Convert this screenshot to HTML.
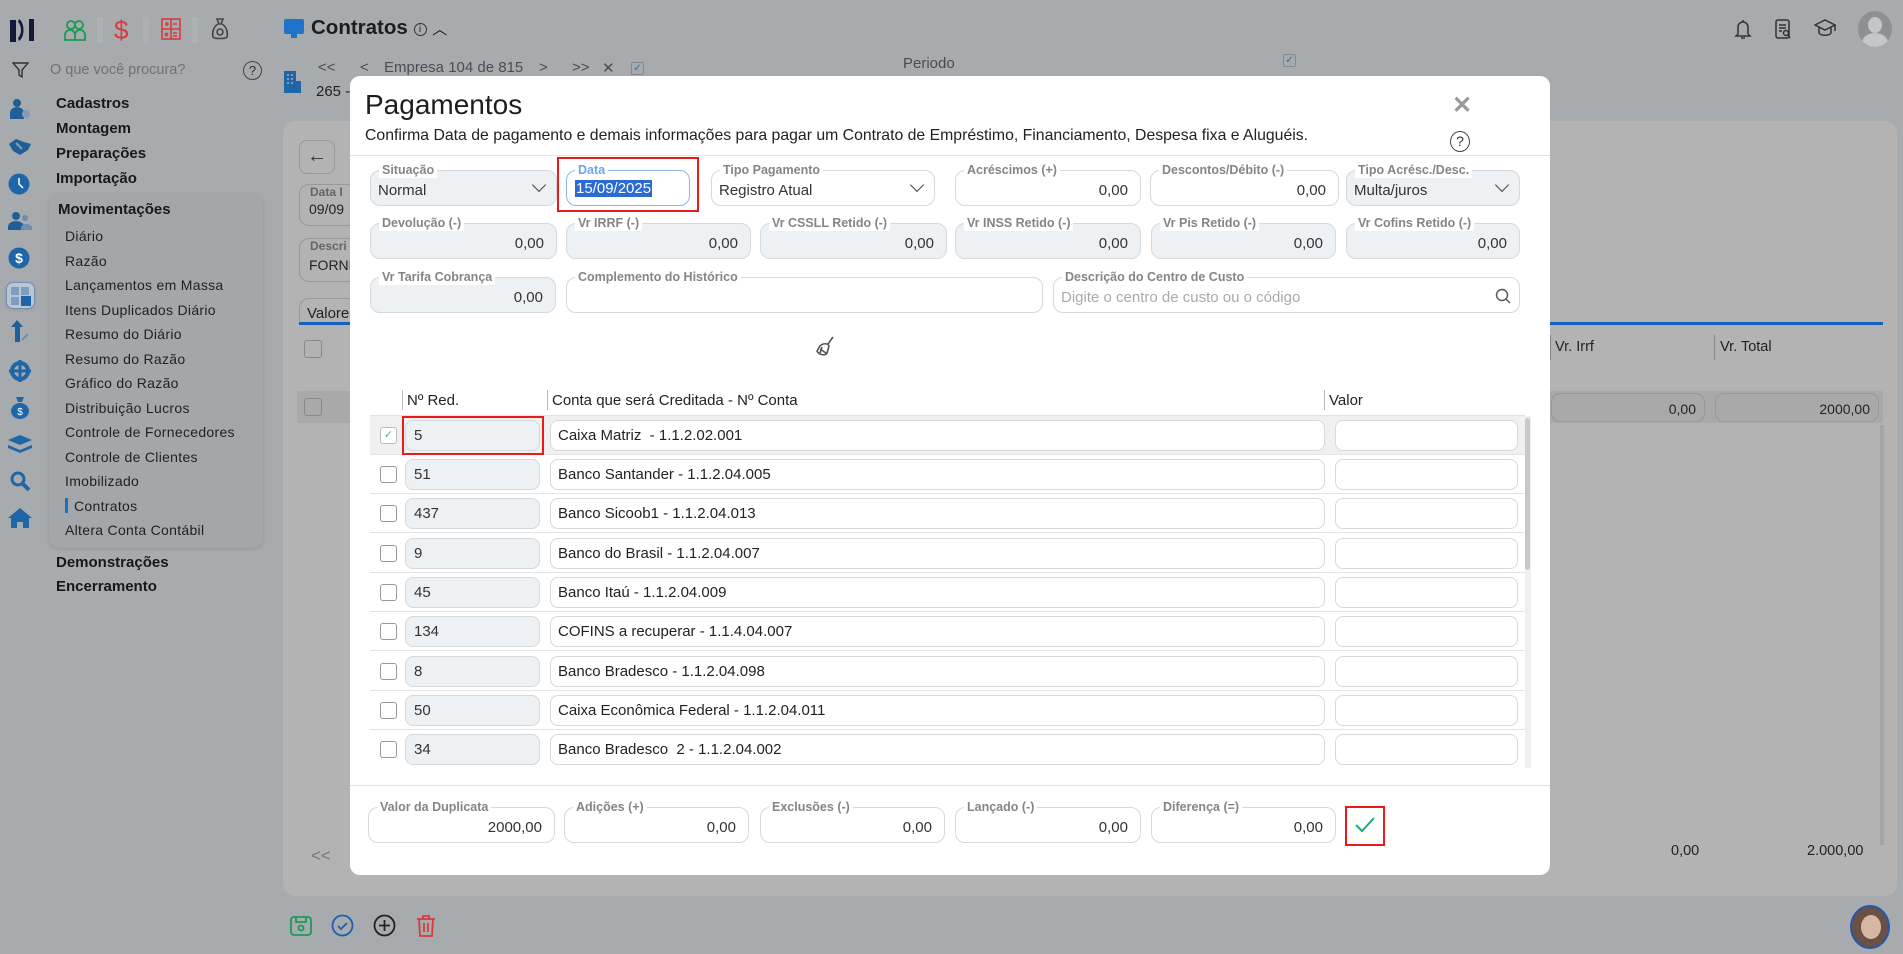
<!DOCTYPE html>
<html><head><meta charset="utf-8">
<style>
*{box-sizing:border-box;margin:0;padding:0}
body{width:1903px;height:954px;overflow:hidden;background:#a8abae;font-family:"Liberation Sans",sans-serif;position:relative;color:#222}
.a{position:absolute}
.side{font-size:14px;color:#1d2126;letter-spacing:.3px}
.hd{font-weight:bold;font-size:15px;color:#15181c}
.modal{position:absolute;left:350px;top:76px;width:1200px;height:799px;background:#fff;border-radius:10px;overflow:hidden}
.f{position:absolute;border:1px solid #d5d8dc;border-radius:10px;background:#fff;height:36px}
.f.g{background:#eef1f4}
.f .l{position:absolute;top:-9px;left:8px;background:#fff;padding:0 3px;font-size:12.5px;font-weight:bold;color:#858585;line-height:16px;white-space:nowrap}
.f .v{position:absolute;right:12px;top:11px;font-size:15px;color:#333}
.f .t{position:absolute;left:7px;top:11px;font-size:15px;color:#333}
.chev{position:absolute;right:12px;width:10px;height:10px;border-right:1.5px solid #444;border-bottom:1.5px solid #444;transform:rotate(45deg);top:9px}
.row{position:absolute;left:20px;width:1155px;height:39px;border-bottom:1px solid #e4e4e4}
.cb{position:absolute;left:10px;top:11px;width:17px;height:17px;border:1px solid #999;border-radius:3px;background:#fff}
.nr{position:absolute;left:35px;top:4px;width:135px;height:31px;background:#eef1f4;border:1px solid #d5d8dc;border-radius:8px;font-size:15px;padding:6px 0 0 8px;color:#333}
.ct{position:absolute;left:180px;top:4px;width:775px;height:31px;background:#fff;border:1px solid #d5d8dc;border-radius:8px;font-size:15px;padding:6px 0 0 7px;color:#222}
.vl{position:absolute;left:965px;top:4px;width:183px;height:31px;background:#fff;border:1px solid #d5d8dc;border-radius:8px}
.nav{position:absolute;top:59px;font-size:15px;color:#4a4d51}
</style></head><body>

<!-- top bar -->
<svg class="a" style="left:8px;top:16px" width="30" height="28"><path d="M2 4h6v22H2z" fill="#141a3a"/><path d="M11 3c6 4 6 18 0 22l-1-3c4-4 4-12 0-16z" fill="#141a3a"/><path d="M21 3h5v22h-5z" fill="#141a3a"/></svg>
<svg class="a" style="left:63px;top:18px" width="24" height="24" viewBox="0 0 24 24" fill="none" stroke="#1a9a55" stroke-width="1.8"><circle cx="8" cy="7" r="4"/><circle cx="16" cy="7" r="4"/><path d="M2 22v-5a5 5 0 0 1 10 0v5zM12 17a5 5 0 0 1 10 0v5h-10"/></svg>
<div class="a" style="left:97px;top:17px;width:6px;height:26px;background:#aeb1b4"></div>
<div class="a" style="left:114px;top:15px;font-size:26px;color:#d63c3c">$</div>
<div class="a" style="left:143px;top:17px;width:6px;height:26px;background:#aeb1b4"></div>
<svg class="a" style="left:161px;top:18px" width="20" height="22" viewBox="0 0 20 22" fill="none" stroke="#d63c3c" stroke-width="1.6"><rect x="1" y="1" width="18" height="20"/><path d="M10 1v20M1 11h18M4 6h4M6 4v4M12 6h4M4 15l3 3M7 15l-3 3M12 15h4M12 18h4"/></svg>
<div class="a" style="left:192px;top:17px;width:6px;height:26px;background:#aeb1b4"></div>
<svg class="a" style="left:211px;top:17px" width="18" height="24" viewBox="0 0 18 24" fill="none" stroke="#444" stroke-width="1.6"><path d="M6 2h6l-2 5h-2zM7 7C2 10 1 16 2 20c1 2 13 2 14 0 1-4 0-10-5-13"/><circle cx="9" cy="15" r="3"/></svg>
<div class="a" style="left:284px;top:19px;width:20px;height:15px;background:#1e73c8;border-radius:2px"></div>
<div class="a" style="left:291px;top:34px;width:6px;height:4px;background:#1e73c8"></div>
<div class="a" style="left:311px;top:16px;font-size:20.5px;font-weight:bold;color:#1a1d22">Contratos <span style="font-weight:normal;border:1px solid #333;border-radius:50%;display:inline-block;width:13px;height:13px;line-height:12px;text-align:center;font-size:10px;vertical-align:2px">i</span> <span style="font-size:15px;font-weight:normal">︿</span></div>

<svg class="a" style="left:1734px;top:18px" width="18" height="22" viewBox="0 0 18 22" fill="none" stroke="#333" stroke-width="1.5"><path d="M9 2v2M4 16V9a5 5 0 0 1 10 0v7l2 2H2zM7 20h4"/></svg>
<svg class="a" style="left:1775px;top:19px" width="17" height="21" viewBox="0 0 17 21" fill="none" stroke="#333" stroke-width="1.5"><rect x="1" y="1" width="13" height="18" rx="2"/><path d="M4 6h7M4 9h7M4 12h3"/><circle cx="11" cy="14" r="2.5"/><path d="M13 16l2 3"/></svg>
<svg class="a" style="left:1814px;top:18px" width="22" height="22" viewBox="0 0 22 22" fill="none" stroke="#333" stroke-width="1.5"><path d="M1 7l10-5 10 5-10 5zM5 9v6c2 3 10 3 12 0V9M21 7v6"/></svg>
<div class="a" style="left:1858px;top:11px;width:34px;height:36px;border-radius:50%;background:#8e9194;overflow:hidden"><div style="position:absolute;left:10px;top:6px;width:14px;height:16px;border-radius:50%;background:#c4c6c8"></div><div style="position:absolute;left:4px;top:22px;width:26px;height:20px;border-radius:50%;background:#c4c6c8"></div></div>

<!-- sidebar search -->
<svg class="a" style="left:12px;top:62px" width="17" height="17" viewBox="0 0 17 17" fill="none" stroke="#333" stroke-width="1.4"><path d="M1 1h15l-6 7v7l-3-2V8z"/></svg>
<div class="a" style="left:50px;top:62px;font-size:14.5px;color:#6e7175">O que você procura?</div>
<div class="a" style="left:243px;top:61px;width:19px;height:19px;border:1.5px solid #444;border-radius:50%;text-align:center;font-size:13px;line-height:17px;color:#333">?</div>

<!-- left icons -->
<svg class="a" style="left:9px;top:98px" width="22" height="22"><circle cx="8" cy="5" r="4" fill="#1f5f99"/><path d="M1 21v-6a7 6 0 0 1 14 0v6z" fill="#1f5f99"/><circle cx="17" cy="16" r="4" fill="#8a9bb0"/></svg>
<svg class="a" style="left:8px;top:138px" width="24" height="18"><path d="M1 6l7-5 8 3 7 2-3 6-8 5-7-4z" fill="#1f5f99"/><path d="M8 5l6 6" stroke="#8a9bb0" stroke-width="2"/></svg>
<svg class="a" style="left:8px;top:173px" width="22" height="22"><circle cx="11" cy="11" r="10.5" fill="#1f66a8"/><path d="M11 5v6l4 4" stroke="#fff" stroke-width="1.5" fill="none"/></svg>
<svg class="a" style="left:8px;top:211px" width="24" height="20"><circle cx="8" cy="5" r="4" fill="#1f5f99"/><path d="M0 19v-3a8 6 0 0 1 16 0v3z" fill="#1f5f99"/><circle cx="17" cy="7" r="3" fill="#6f8db0"/><path d="M13 19v-3a6 5 0 0 1 11 0v3z" fill="#6f8db0"/></svg>
<svg class="a" style="left:8px;top:247px" width="22" height="22"><circle cx="11" cy="11" r="10.5" fill="#1f66a8"/><text x="11" y="16" font-size="14" font-family="Liberation Sans" fill="#fff" text-anchor="middle" font-weight="bold">$</text></svg>
<div class="a" style="left:6px;top:282px;width:29px;height:27px;border:1.5px solid #6e8fb3;border-radius:7px;background:#b9c6d3;box-shadow:0 1px 3px #8888"><div style="position:absolute;left:4px;top:4px;width:8px;height:8px;background:#7e9cbc"></div><div style="position:absolute;left:14px;top:4px;width:8px;height:8px;background:#7e9cbc"></div><div style="position:absolute;left:4px;top:14px;width:8px;height:8px;background:#7e9cbc"></div><div style="position:absolute;left:14px;top:13px;width:10px;height:10px;background:#1f66a8"></div></div>
<svg class="a" style="left:10px;top:320px" width="20" height="24"><path d="M7 0l-6 7h4v15h5V7h3z" fill="#1f5f99"/><path d="M12 20l6-6" stroke="#6f8db0" stroke-width="2"/></svg>
<svg class="a" style="left:8px;top:359px" width="24" height="24"><circle cx="12" cy="12" r="8" fill="none" stroke="#1f66a8" stroke-width="4"/><path d="M12 1v22M1 12h22" stroke="#1f66a8" stroke-width="3"/></svg>
<svg class="a" style="left:10px;top:396px" width="20" height="24"><path d="M6 1h8l-2 5h-4z" fill="#1f66a8"/><ellipse cx="10" cy="15" rx="9" ry="8" fill="#1f66a8"/><text x="10" y="19" font-size="10" fill="#fff" text-anchor="middle" font-family="Liberation Sans">$</text></svg>
<svg class="a" style="left:8px;top:435px" width="24" height="18"><path d="M12 0l12 5-12 5L0 5z" fill="#1f66a8"/><path d="M0 10l12 5 12-5v3l-12 5-12-5z" fill="#1f66a8"/></svg>
<svg class="a" style="left:9px;top:470px" width="22" height="22"><circle cx="9" cy="9" r="6" fill="none" stroke="#1f66a8" stroke-width="3"/><path d="M13 13l7 7" stroke="#1f66a8" stroke-width="4"/></svg>
<svg class="a" style="left:8px;top:508px" width="24" height="20"><path d="M12 0L0 10h3v10h6v-6h6v6h6V10h3z" fill="#1f66a8"/></svg>

<!-- sidebar menu -->
<div class="a hd" style="left:56px;top:95px">Cadastros</div>
<div class="a hd" style="left:56px;top:120px">Montagem</div>
<div class="a hd" style="left:56px;top:145px">Preparações</div>
<div class="a hd" style="left:56px;top:170px">Importação</div>
<div class="a" style="left:49px;top:194px;width:214px;height:354px;background:#a4a7aa;border-radius:10px;box-shadow:0 1px 4px rgba(0,0,0,.12)"></div>
<div class="a hd" style="left:58px;top:201px">Movimentações</div>
<div class="side a" style="left:65px;top:228px">Diário</div>
<div class="side a" style="left:65px;top:253px">Razão</div>
<div class="side a" style="left:65px;top:277px">Lançamentos em Massa</div>
<div class="side a" style="left:65px;top:302px">Itens Duplicados Diário</div>
<div class="side a" style="left:65px;top:326px">Resumo do Diário</div>
<div class="side a" style="left:65px;top:351px">Resumo do Razão</div>
<div class="side a" style="left:65px;top:375px">Gráfico do Razão</div>
<div class="side a" style="left:65px;top:400px">Distribuição Lucros</div>
<div class="side a" style="left:65px;top:424px">Controle de Fornecedores</div>
<div class="side a" style="left:65px;top:449px">Controle de Clientes</div>
<div class="side a" style="left:65px;top:473px">Imobilizado</div>
<div class="a" style="left:65px;top:498px;width:3px;height:15px;background:#1e6fc0"></div>
<div class="side a" style="left:74px;top:498px">Contratos</div>
<div class="side a" style="left:65px;top:522px">Altera Conta Contábil</div>
<div class="a hd" style="left:56px;top:554px">Demonstrações</div>
<div class="a hd" style="left:56px;top:578px">Encerramento</div>

<!-- main behind -->
<div class="nav" style="left:318px">&lt;&lt;</div>
<div class="nav" style="left:360px">&lt;</div>
<div class="nav" style="left:384px">Empresa 104 de 815</div>
<div class="nav" style="left:539px">&gt;</div>
<div class="nav" style="left:572px">&gt;&gt;</div>
<div class="nav" style="left:602px">✕</div>
<div class="a" style="left:631px;top:62px;width:13px;height:13px;border:1px solid #888;border-radius:2px;color:#2b6cb0;font-size:10px;line-height:11px;text-align:center">✓</div>
<svg class="a" style="left:284px;top:71px" width="18" height="22"><rect x="0" y="0" width="12" height="22" fill="#1f66a8"/><rect x="12" y="10" width="5" height="12" fill="#1f66a8"/><path d="M3 4h2M7 4h2M3 8h2M7 8h2M3 12h2M7 12h2" stroke="#a8abae" stroke-width="1.5"/></svg>
<div class="a" style="left:316px;top:83px;font-size:15px;color:#222">265 -</div>
<div class="a" style="left:903px;top:55px;font-size:15px;color:#4a4d51">Periodo</div>
<div class="a" style="left:1283px;top:54px;width:13px;height:13px;border:1px solid #888;border-radius:2px;color:#2b6cb0;font-size:10px;line-height:11px;text-align:center">✓</div>
<div class="a" style="left:283px;top:121px;width:1614px;height:775px;background:#b3b3b3;border-radius:12px"></div>
<div class="a" style="left:299px;top:140px;width:36px;height:34px;border:1px solid #999;border-radius:8px;font-size:20px;text-align:center;line-height:30px;color:#333">←</div>
<div class="a" style="left:299px;top:184px;width:60px;height:42px;border:1px solid #999;border-radius:10px"></div>
<div class="a" style="left:310px;top:185px;font-size:12px;font-weight:bold;color:#666">Data I</div>
<div class="a" style="left:309px;top:201px;font-size:14px;color:#222">09/09</div>
<div class="a" style="left:299px;top:238px;width:60px;height:44px;border:1px solid #999;border-radius:10px"></div>
<div class="a" style="left:310px;top:239px;font-size:12px;font-weight:bold;color:#666">Descri</div>
<div class="a" style="left:309px;top:257px;font-size:14px;color:#222">FORNE</div>
<div class="a" style="left:299px;top:298px;width:60px;height:25px;border:1px solid #999;border-bottom:none;border-radius:10px 10px 0 0"></div>
<div class="a" style="left:307px;top:305px;font-size:15px;color:#222">Valore</div>
<div class="a" style="left:299px;top:322px;width:1584px;height:3px;background:#1560b8"></div>
<div class="a" style="left:304px;top:340px;width:18px;height:18px;border:1px solid #888;border-radius:3px"></div>
<div class="a" style="left:1550px;top:335px;width:1px;height:25px;background:#888"></div>
<div class="a" style="left:1714px;top:335px;width:1px;height:25px;background:#888"></div>
<div class="a" style="left:1555px;top:339px;font-size:14.5px;color:#222">Vr. Irrf</div>
<div class="a" style="left:1720px;top:339px;font-size:14.5px;color:#222">Vr. Total</div>
<div class="a" style="left:297px;top:391px;width:1586px;height:32px;background:#a9a9a9"></div>
<div class="a" style="left:304px;top:398px;width:18px;height:18px;border:1px solid #888;border-radius:3px"></div>
<div class="a" style="left:1551px;top:393px;width:154px;height:29px;border:1px solid #999;border-radius:9px;text-align:right;padding:7px 8px;font-size:14px">0,00</div>
<div class="a" style="left:1715px;top:393px;width:164px;height:29px;border:1px solid #999;border-radius:9px;text-align:right;padding:7px 8px;font-size:14px">2000,00</div>
<div class="a" style="left:1880px;top:425px;width:4px;height:420px;background:#a5a5a5"></div>
<div class="a" style="left:311px;top:846px;font-size:17px;color:#777">&lt;&lt;</div>
<div class="a" style="left:1671px;top:843px;font-size:14.5px;color:#222">0,00</div>
<div class="a" style="left:1807px;top:843px;font-size:14.5px;color:#222">2.000,00</div>
<svg class="a" style="left:290px;top:915px" width="22" height="22" fill="none" stroke="#1a9a55" stroke-width="1.8"><rect x="1" y="2" width="20" height="18" rx="3"/><path d="M6 2v5h10V2"/><circle cx="11" cy="13" r="2.5"/></svg>
<svg class="a" style="left:331px;top:914px" width="23" height="23" fill="none" stroke="#1e5fb0" stroke-width="1.8"><circle cx="11.5" cy="11.5" r="10"/><path d="M7 12l3 3 6-6"/></svg>
<svg class="a" style="left:373px;top:914px" width="23" height="23" fill="none" stroke="#222" stroke-width="1.8"><circle cx="11.5" cy="11.5" r="10"/><path d="M11.5 6v11M6 11.5h11"/></svg>
<svg class="a" style="left:416px;top:914px" width="20" height="23" fill="none" stroke="#d63c3c" stroke-width="1.8"><path d="M1 5h18M7 5V2h6v3M3 5l1 17h12l1-17M8 9v9M12 9v9"/></svg>
<div class="a" style="left:1850px;top:905px;width:40px;height:44px;border-radius:50%;background:#6b5145;border:2px solid #2358a8;overflow:hidden"><div style="position:absolute;left:9px;top:8px;width:20px;height:24px;border-radius:50%;background:#d7b7a4"></div></div>

<!-- modal -->
<div class="modal">
  <div class="a" style="left:15px;top:13px;font-size:28px;color:#1b1d21">Pagamentos</div>
  <div class="a" style="left:15px;top:51px;font-size:15.8px;color:#222">Confirma Data de pagamento e demais informações para pagar um Contrato de Empréstimo, Financiamento, Despesa fixa e Aluguéis.</div>
  <div class="a" style="left:1102px;top:15px;font-size:24px;color:#999;font-weight:bold">✕</div>
  <div class="a" style="left:1100px;top:55px;width:20px;height:21px;border:1.5px solid #444;border-radius:50%;text-align:center;font-size:14px;line-height:18px;color:#333">?</div>
  <div class="a" style="left:0;top:79px;width:1200px;height:1px;background:#e2e2e2"></div>

  <!-- row1 -->
  <div class="f g" style="left:20px;top:94px;width:187px"><span class="l">Situação</span><span class="t">Normal</span><i class="chev"></i></div>
  <div class="f" style="left:216px;top:94px;width:124px;border-color:#8bb6ea"><span class="l" style="color:#6aa6ee">Data</span><span class="t" style="top:9px;background:#2a6bd3;color:#fff;padding:0 1px;left:8px">15/09/2025</span></div>
  <div class="a" style="left:207px;top:81px;width:142px;height:55px;border:2.5px solid #e81a1a"></div>
  <div class="f" style="left:361px;top:94px;width:224px"><span class="l">Tipo Pagamento</span><span class="t">Registro Atual</span><i class="chev"></i></div>
  <div class="f" style="left:605px;top:94px;width:186px"><span class="l">Acréscimos (+)</span><span class="v">0,00</span></div>
  <div class="f" style="left:800px;top:94px;width:189px"><span class="l">Descontos/Débito (-)</span><span class="v">0,00</span></div>
  <div class="f g" style="left:996px;top:94px;width:174px"><span class="l">Tipo Acrésc./Desc.</span><span class="t">Multa/juros</span><i class="chev"></i></div>

  <!-- row2 -->
  <div class="f g" style="left:20px;top:147px;width:187px"><span class="l">Devolução (-)</span><span class="v">0,00</span></div>
  <div class="f g" style="left:216px;top:147px;width:185px"><span class="l">Vr IRRF (-)</span><span class="v">0,00</span></div>
  <div class="f g" style="left:410px;top:147px;width:187px"><span class="l">Vr CSSLL Retido (-)</span><span class="v">0,00</span></div>
  <div class="f g" style="left:605px;top:147px;width:186px"><span class="l">Vr INSS Retido (-)</span><span class="v">0,00</span></div>
  <div class="f g" style="left:801px;top:147px;width:185px"><span class="l">Vr Pis Retido (-)</span><span class="v">0,00</span></div>
  <div class="f g" style="left:996px;top:147px;width:174px"><span class="l">Vr Cofins Retido (-)</span><span class="v">0,00</span></div>

  <!-- row3 -->
  <div class="f g" style="left:20px;top:201px;width:186px"><span class="l">Vr Tarifa Cobrança</span><span class="v">0,00</span></div>
  <div class="f" style="left:216px;top:201px;width:477px"><span class="l">Complemento do Histórico</span></div>
  <div class="f" style="left:703px;top:201px;width:467px"><span class="l">Descrição do Centro de Custo</span><span class="t" style="color:#aaa">Digite o centro de custo ou o código</span>
    <svg style="position:absolute;right:8px;top:10px" width="16" height="16" fill="none" stroke="#555" stroke-width="1.4"><circle cx="7" cy="7" r="5.5"/><path d="M11 11l4 4"/></svg></div>

  <!-- broom -->
  <svg class="a" style="left:466px;top:260px" width="20" height="22" fill="none" stroke="#555" stroke-width="1.6"><path d="M17 1l-5 7M4 10c3-3 8-3 9 0l-2 7c-2 3-8 2-10-2z M4 13l6 4M6 11l-2 6"/></svg>

  <!-- table header -->
  <div class="a" style="left:52px;top:314px;width:1px;height:20px;background:#bbb"></div>
  <div class="a" style="left:57px;top:316px;font-size:15px;color:#222">Nº Red.</div>
  <div class="a" style="left:197px;top:314px;width:1px;height:20px;background:#bbb"></div>
  <div class="a" style="left:202px;top:316px;font-size:15px;color:#222">Conta que será Creditada - Nº Conta</div>
  <div class="a" style="left:974px;top:314px;width:1px;height:20px;background:#bbb"></div>
  <div class="a" style="left:979px;top:316px;font-size:15px;color:#222">Valor</div>
  <div class="a" style="left:20px;top:339px;width:1155px;height:1px;background:#e2e2e2"></div>

  <div class="row" style="top:340px;background:#f0f0f0"><div class="cb" style="border-color:#bbb;color:#3cb989;font-size:11px;line-height:15px;text-align:center">✓</div><div class="nr">5</div><div class="ct">Caixa Matriz &nbsp;- 1.1.2.02.001</div><div class="vl"></div></div>
  <div class="a" style="left:52px;top:340px;width:142px;height:39px;border:2.5px solid #e81a1a"></div>
  <div class="row" style="top:379px"><div class="cb"></div><div class="nr">51</div><div class="ct">Banco Santander - 1.1.2.04.005</div><div class="vl"></div></div>
  <div class="row" style="top:418px"><div class="cb"></div><div class="nr">437</div><div class="ct">Banco Sicoob1 - 1.1.2.04.013</div><div class="vl"></div></div>
  <div class="row" style="top:458px"><div class="cb"></div><div class="nr">9</div><div class="ct">Banco do Brasil - 1.1.2.04.007</div><div class="vl"></div></div>
  <div class="row" style="top:497px"><div class="cb"></div><div class="nr">45</div><div class="ct">Banco Itaú - 1.1.2.04.009</div><div class="vl"></div></div>
  <div class="row" style="top:536px"><div class="cb"></div><div class="nr">134</div><div class="ct">COFINS a recuperar - 1.1.4.04.007</div><div class="vl"></div></div>
  <div class="row" style="top:576px"><div class="cb"></div><div class="nr">8</div><div class="ct">Banco Bradesco - 1.1.2.04.098</div><div class="vl"></div></div>
  <div class="row" style="top:615px"><div class="cb"></div><div class="nr">50</div><div class="ct">Caixa Econômica Federal - 1.1.2.04.011</div><div class="vl"></div></div>
  <div class="row" style="top:654px;border-bottom:none"><div class="cb"></div><div class="nr">34</div><div class="ct">Banco Bradesco &nbsp;2 - 1.1.2.04.002</div><div class="vl"></div></div>
  <div class="a" style="left:1175px;top:340px;width:6px;height:352px;background:#f0f0f0"></div>
  <div class="a" style="left:1175px;top:342px;width:5px;height:152px;background:#c8c8cc;border-radius:3px"></div>

  <div class="a" style="left:0;top:709px;width:1200px;height:1px;background:#e2e2e2"></div>
  <!-- footer -->
  <div class="f" style="left:18px;top:731px;width:187px"><span class="l">Valor da Duplicata</span><span class="v">2000,00</span></div>
  <div class="f" style="left:214px;top:731px;width:185px"><span class="l">Adições (+)</span><span class="v">0,00</span></div>
  <div class="f" style="left:410px;top:731px;width:185px"><span class="l">Exclusões (-)</span><span class="v">0,00</span></div>
  <div class="f" style="left:605px;top:731px;width:186px"><span class="l">Lançado (-)</span><span class="v">0,00</span></div>
  <div class="f" style="left:801px;top:731px;width:185px"><span class="l">Diferença (=)</span><span class="v">0,00</span></div>
  <div class="a" style="left:995px;top:730px;width:40px;height:40px;border:2.5px solid #e81a1a"></div>
  <svg class="a" style="left:1005px;top:741px" width="20" height="16" fill="none" stroke="#1faa78" stroke-width="2"><path d="M1 8l6 6L19 1"/></svg>
</div>
</body></html>
